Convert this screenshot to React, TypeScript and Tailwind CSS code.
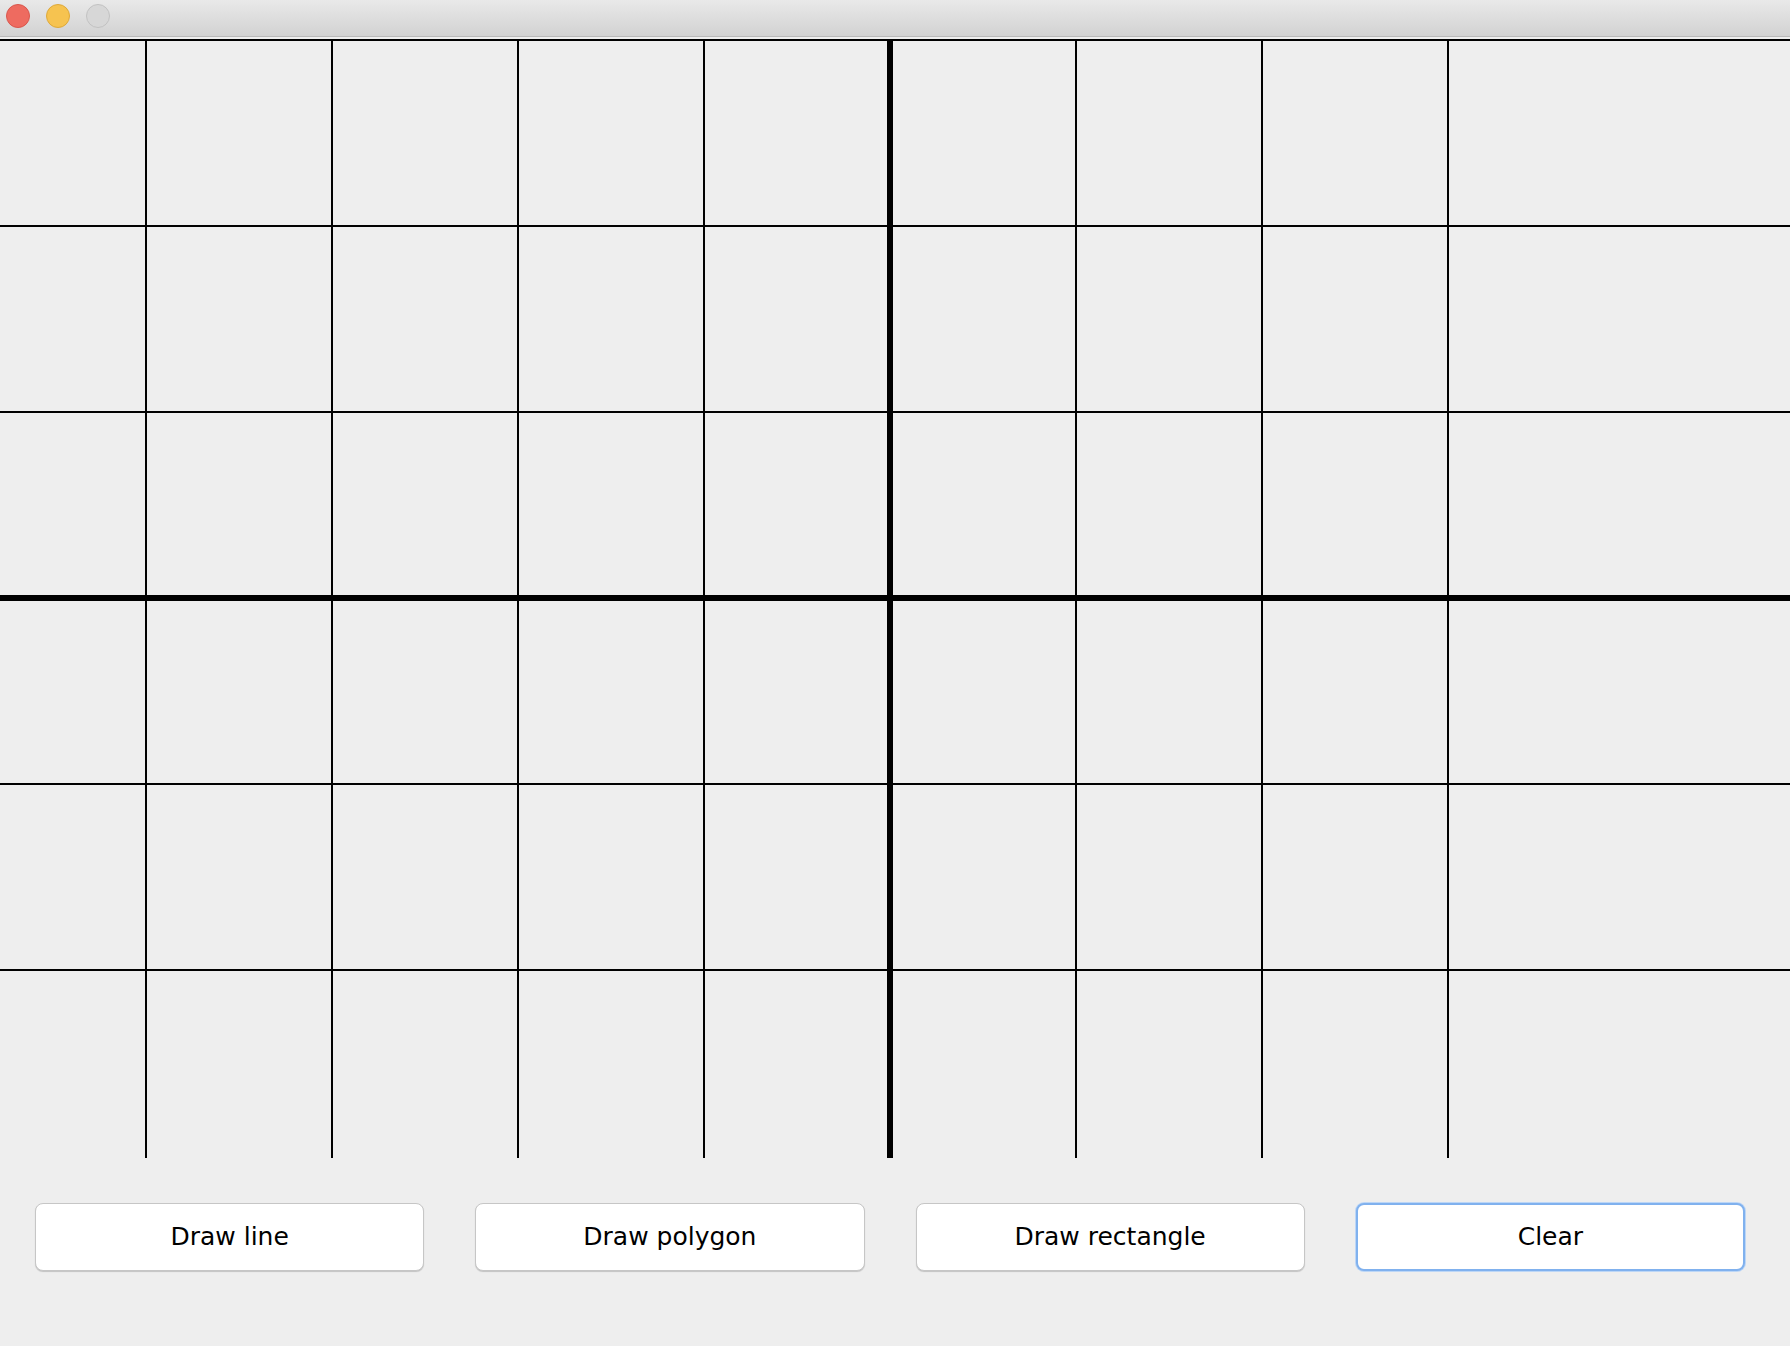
import React from "react";

const VX = [146, 332, 518, 704, 890, 1076, 1262, 1448];
const HY = [1, 187, 373, 559, 745, 931];
const H = 1119;

function Canvas() {
  return (
    <div className="h-[1119px] w-full">
      <svg width="1790" height={H} viewBox={`0 0 1790 ${H}`} className="block">
        {HY.map((y) => (
          <line key={"h" + y} x1={0} x2={1790} y1={y} y2={y} stroke="#000" strokeWidth={y === 559 ? 6 : 2} shapeRendering="crispEdges" />
        ))}
        {VX.map((x) => (
          <line key={"v" + x} x1={x} x2={x} y1={0} y2={H} stroke="#000" strokeWidth={x === 890 ? 6 : 2} shapeRendering="crispEdges" />
        ))}
      </svg>
    </div>
  );
}

function Btn({ label, focused }: { label: string; focused?: boolean }) {
  return (
    <button
      className={
        "h-[68px] rounded-[8px] bg-white text-black text-[25px] flex items-center justify-center " +
        (focused
          ? "border-2 border-[#80b1ee] shadow-[0_0_0_1px_#bcd6f6]"
          : "border border-[#c6c6c6] shadow-[0_1px_1px_rgba(0,0,0,0.18)]")
      }
      style={{ fontFamily: '"DejaVu Sans", sans-serif' }}
    >
      {label}
    </button>
  );
}

export default function App() {
  return (
    <div className="w-[1790px] h-[1346px] bg-[#eeeeee] flex flex-col overflow-hidden">
      <div className="h-[37px] shrink-0 bg-gradient-to-b from-[#e9e9e9] to-[#d2d2d2] border-b border-[#b9b9b9] flex items-start pt-[4px] gap-[16px] pl-[6px]">
        <div className="w-[24px] h-[24px] rounded-full bg-[#ee6b60] border border-[#d9574d]" />
        <div className="w-[24px] h-[24px] rounded-full bg-[#f6c350] border border-[#dea93a]" />
        <div className="w-[24px] h-[24px] rounded-full bg-[#d7d7d7] border border-[#c2c2c2]" />
      </div>
      <div className="h-[2px] shrink-0 bg-[#eeeeee]" />
      <Canvas />
      <div className="grid grid-cols-4 gap-[51px] pl-[35px] pr-[45px] pt-[45px]">
        <Btn label="Draw line" />
        <Btn label="Draw polygon" />
        <Btn label="Draw rectangle" />
        <Btn label="Clear" focused />
      </div>
    </div>
  );
}
